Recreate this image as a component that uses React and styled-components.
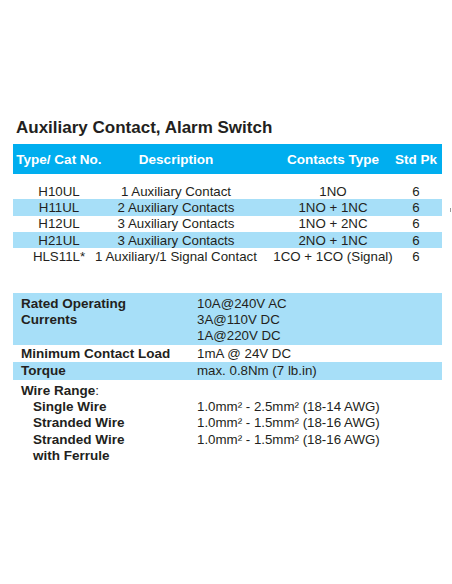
import styled, { createGlobalStyle } from "styled-components";

const GlobalStyle = createGlobalStyle`
  html, body {
    margin: 0;
    padding: 0;
    background: #fff;
  }
  body {
    font-family: "Liberation Sans", Arial, sans-serif;
    color: #231f20;
  }
`;

const Page = styled.div`
  position: relative;
  width: 452px;
  height: 584px;
  padding: 118px 10px 0 13px;
  box-sizing: border-box;
  overflow: hidden;
`;

const Title = styled.h1`
  margin: 0 0 6px 3px;
  font-size: 17px;
  line-height: 20px;
  font-weight: bold;
`;

const Table = styled.div`
  width: 429px;
`;

const Row = styled.div`
  display: grid;
  grid-template-columns: 92px 142px 143px 52px;
  align-items: center;
  height: ${(p) => p.$h || "16.33px"};
  background: ${(p) => (p.$head ? "#00aeef" : p.$band ? "#a7dff8" : "transparent")};
  color: ${(p) => (p.$head ? "#fff" : "inherit")};
  font-size: ${(p) => (p.$head ? "13.5px" : "13.3px")};
  font-weight: ${(p) => (p.$head ? "bold" : "normal")};
`;

const Cell = styled.div`
  min-width: 0;
  white-space: nowrap;
  padding-left: ${(p) => p.$pl || 0};
  display: flex;
  justify-content: center;
`;

const Body = styled.div`
  margin-top: 9px;
`;

const Specs = styled.div`
  width: 429px;
  margin-top: 28px;
  font-size: 13.3px;
  line-height: 16.4px;
`;

const SpecRow = styled.div`
  display: grid;
  grid-template-columns: 176px 1fr;
  padding: ${(p) => p.$pad || "0"} 0 0 8px;
  min-height: ${(p) => p.$h || "auto"};
  box-sizing: border-box;
  background: ${(p) => (p.$band ? "#a7dff8" : "transparent")};
`;

const Label = styled.div`
  font-weight: bold;
  font-size: 13.5px;
  padding-left: ${(p) => (p.$sub ? "12px" : "0")};
  white-space: nowrap;
`;

const Colon = styled.span`
  font-weight: normal;
`;

const Values = styled.div`
  display: flex;
  flex-direction: column;
  white-space: nowrap;
`;

const Mark = styled.span`
  position: absolute;
  left: 450px;
  top: 208px;
  width: 1px;
  height: 4px;
  background: #9a9a9a;
`;

const rows = [
  ["H10UL", "1 Auxiliary Contact", "1NO", "6"],
  ["H11UL", "2 Auxiliary Contacts", "1NO + 1NC", "6"],
  ["H12UL", "3 Auxiliary Contacts", "1NO + 2NC", "6"],
  ["H21UL", "3 Auxiliary Contacts", "2NO + 1NC", "6"],
  ["HLS11L*", "1 Auxiliary/1 Signal Contact", "1CO + 1CO (Signal)", "6"],
];

export default function App() {
  return (
    <>
      <GlobalStyle />
      <Page>
        <Title>Auxiliary Contact, Alarm Switch</Title>
        <Table>
          <Row $head $h="30px">
            <Cell>Type/ Cat No.</Cell>
            <Cell>Description</Cell>
            <Cell $pl="29px">Contacts Type</Cell>
            <Cell>Std Pk</Cell>
          </Row>
          <Body>
            {rows.map((r, i) => (
              <Row key={r[0]} $band={i % 2 === 1}>
                <Cell>{r[0]}</Cell>
                <Cell>{r[1]}</Cell>
                <Cell $pl="29px">{r[2]}</Cell>
                <Cell>{r[3]}</Cell>
              </Row>
            ))}
          </Body>
        </Table>

        <Specs>
          <SpecRow $band $pad="3px" $h="51px">
            <Label>
              Rated Operating
              <br />
              Currents
            </Label>
            <Values>
              <span>10A@240V AC</span>
              <span>3A@110V DC</span>
              <span>1A@220V DC</span>
            </Values>
          </SpecRow>
          <SpecRow $pad="1px" $h="16px">
            <Label>Minimum Contact Load</Label>
            <Values>
              <span>1mA @ 24V DC</span>
            </Values>
          </SpecRow>
          <SpecRow $band $pad="1px" $h="17px">
            <Label>Torque</Label>
            <Values>
              <span>max. 0.8Nm (7 lb.in)</span>
            </Values>
          </SpecRow>
          <SpecRow $pad="3px">
            <Label>
              Wire Range<Colon>:</Colon>
            </Label>
          </SpecRow>
          <SpecRow>
            <Label $sub>Single Wire</Label>
            <Values>
              <span>1.0mm² - 2.5mm² (18-14 AWG)</span>
            </Values>
          </SpecRow>
          <SpecRow>
            <Label $sub>Stranded Wire</Label>
            <Values>
              <span>1.0mm² - 1.5mm² (18-16 AWG)</span>
            </Values>
          </SpecRow>
          <SpecRow>
            <Label $sub>
              Stranded Wire
              <br />
              with Ferrule
            </Label>
            <Values>
              <span>1.0mm² - 1.5mm² (18-16 AWG)</span>
            </Values>
          </SpecRow>
        </Specs>
        <Mark />
      </Page>
    </>
  );
}
